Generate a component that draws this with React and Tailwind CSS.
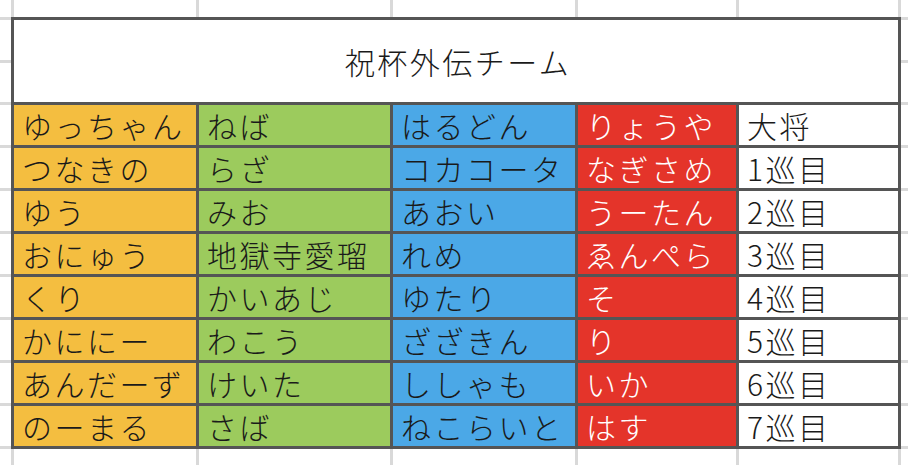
import React from "react";

const rows = [
  ["ゆっちゃん", "ねば", "はるどん", "りょうや", "大将"],
  ["つなきの", "らざ", "コカコータ", "なぎさめ", "1巡目"],
  ["ゆう", "みお", "あおい", "うーたん", "2巡目"],
  ["おにゅう", "地獄寺愛瑠", "れめ", "ゑんぺら", "3巡目"],
  ["くり", "かいあじ", "ゆたり", "そ", "4巡目"],
  ["かににー", "わこう", "ざざきん", "り", "5巡目"],
  ["あんだーず", "けいた", "ししゃも", "いか", "6巡目"],
  ["のーまる", "さば", "ねこらいと", "はす", "7巡目"],
];

const cellCls = [
  "bg-[#f4be40] text-[#1a1a1a]",
  "bg-[#9ccb5d] text-[#1a1a1a]",
  "bg-[#4ba8e7] text-[#1a1a1a]",
  "bg-[#e4342a] text-white",
  "bg-white text-[#1a1a1a]",
];

function VStrip({ grow }) {
  return (
    <div className={grow ? "flex-1 flex" : "h-[17px] flex"}>
      <div className="w-[11px] shrink-0" />
      <div className="w-[185px] shrink-0 border-l-[3px] border-[#d9d9d9]" />
      <div className="w-[194px] shrink-0 border-l-[3px] border-[#d9d9d9]" />
      <div className="w-[185px] shrink-0 border-l-[3px] border-[#d9d9d9]" />
      <div className="w-[161px] shrink-0 border-l-[3px] border-[#d9d9d9]" />
      <div className="w-[162px] shrink-0 border-l-[3px] border-[#d9d9d9]" />
      <div className="flex-1 border-l-[3px] border-[#d9d9d9]" />
    </div>
  );
}

function HLines({ className }) {
  const hs = [43, 42, 43, 43, 43, 43, 43, 43, 43, 43];
  return (
    <div className={"flex flex-col " + className}>
      {hs.map((h, i) => (
        <div
          key={i}
          className={
            (h === 43 ? "h-[43px]" : "h-[42px]") +
            " border-t-[3px] border-[#d9d9d9]"
          }
        />
      ))}
      <div className="h-[3px] bg-[#d9d9d9]" />
    </div>
  );
}

export default function App() {
  return (
    <div
      className="w-[908px] h-[465px] bg-white overflow-hidden flex flex-col"
      style={{ fontFamily: '"Noto Sans CJK JP", "Noto Sans", sans-serif' }}
    >
      <VStrip />
      <div className="flex h-[432px]">
        <HLines className="w-[11px] shrink-0" />
        <div className="grid grid-cols-[182px_191px_182px_158px_159px] grid-rows-[82px_repeat(8,40px)] gap-[3px] p-[3px] bg-[#555555] w-[890px] shrink-0">
          <div className="col-span-5 bg-white flex items-center justify-center text-[30px] font-light tracking-[2.5px] leading-[40px] text-[#1a1a1a] pl-[4px]">
            祝杯外伝チーム
          </div>
          {rows.map((r, i) =>
            r.map((t, j) => (
              <div
                key={i + "-" + j}
                className={
                  cellCls[j] +
                  " flex items-center pl-[8px] text-[30px] font-light tracking-[2.5px] leading-[40px] whitespace-nowrap"
                }
              >
                {t}
              </div>
            ))
          )}
        </div>
        <HLines className="flex-1" />
      </div>
      <VStrip grow />
    </div>
  );
}
